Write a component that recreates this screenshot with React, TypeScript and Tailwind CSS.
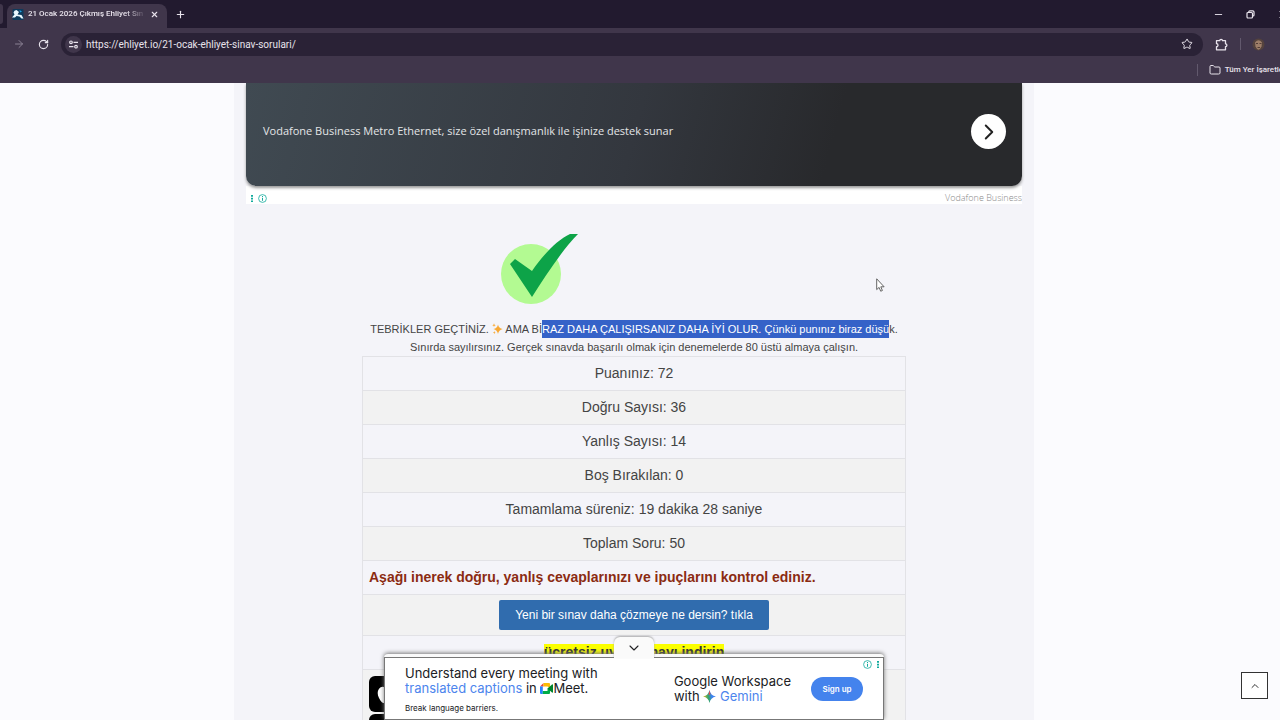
import React from 'react';
import { ArrowRight, ChevronDown, ChevronRight, ChevronUp, Folder, Minus, Plus, RotateCw, Star, X } from 'lucide-react';

const results = [
  'Puanınız: 72',
  'Doğru Sayısı: 36',
  'Yanlış Sayısı: 14',
  'Boş Bırakılan: 0',
  'Tamamlama süreniz: 19 dakika 28 saniye',
  'Toplam Soru: 50',
];

export default function App() {
  return (
    <div className="flex h-screen flex-col overflow-hidden bg-[#fbfbfe] font-['Liberation_Sans',Arial,sans-serif] text-[#444]">
      <BrowserHeader />

      <div className="relative min-h-0 flex-1 overflow-hidden pr-3">
        <main className="mx-auto flex h-full w-full max-w-[800px] flex-col overflow-hidden bg-[#f4f4f9] px-3">
          <TopAd />

          <section className="flex flex-col items-center pt-7">
            <div className="w-full max-w-[544px] pl-[136px]">
              <CheckMark />
            </div>
            <p className="mt-3 text-center text-[11px] leading-[18px]">
              TEBRİKLER GEÇTİNİZ. <Sparkles /> AMA Bİ
              <mark className="inline-block bg-[#3562c8] text-white">
                RAZ DAHA ÇALIŞIRSANIZ DAHA İYİ OLUR. Çünkü punınız biraz düşü
              </mark>
              k.
              <br />
              Sınırda sayılırsınız. Gerçek sınavda başarılı olmak için denemelerde 80 üstü almaya çalışın.
            </p>
            <ResultTable />
          </section>
        </main>

        <BottomAd />

        <button
          aria-label="Yukarı çık"
          className="absolute right-3 bottom-[21px] flex size-[27px] items-center justify-center border border-[#333] bg-white text-[#333]"
        >
          <ChevronUp size={12} />
        </button>

        <svg className="absolute top-[195px] left-[876px]" width="9" height="14" viewBox="0 0 9 14">
          <path d="M.7.8v10.8l2.4-2.2 1.6 3.8 1.7-.7-1.6-3.7h3.3z" fill="#fff" stroke="#555" strokeWidth=".9" />
        </svg>
      </div>
    </div>
  );
}

function BrowserHeader() {
  return (
    <header className="shrink-0 overflow-hidden bg-[#40364b] font-['Roboto','Noto_Sans',sans-serif] text-[#e8e3ec]">
      {/* Tab strip */}
      <div className="flex h-7 items-end bg-[#221a2f]">
        <div className="mr-1 mb-1 h-5 w-[3px] rounded-r-md bg-[#40364b]" />
        <div className="flex h-6 w-40 items-center rounded-t-lg bg-[#40364b] pr-2 pb-1 pl-[5px]">
          <TabLogo />
          <span className="ml-1 flex-1 overflow-hidden text-[8px] font-medium whitespace-nowrap [mask-image:linear-gradient(to_right,black_82%,transparent)]">
            21 Ocak 2026 Çıkmış Ehliyet Sın
          </span>
          <button aria-label="Sekmeyi kapat" className="ml-1">
            <X size={9} strokeWidth={3} />
          </button>
        </div>
        <button aria-label="Yeni sekme" className="mb-2 ml-2">
          <Plus size={11} strokeWidth={2.5} />
        </button>
        <div className="mb-2 ml-auto flex items-center">
          <button aria-label="Küçült" className="mr-[22px]">
            <Minus size={11} strokeWidth={2} />
          </button>
          <button aria-label="Geri yükle" className="mr-[22px]">
            <svg width="9" height="9" viewBox="0 0 9 9" fill="none" stroke="currentColor" strokeWidth="1.2">
              <rect x="1" y="2.5" width="5.5" height="5.5" rx="1" />
              <path d="M2.8 2.3V1.8a1 1 0 0 1 1-1h3a1.2 1.2 0 0 1 1.2 1.2v3a1 1 0 0 1-1 1h-.4" />
            </svg>
          </button>
          <button aria-label="Kapat" className="-mr-2">
            <X size={11} />
          </button>
        </div>
      </div>

      {/* Toolbar */}
      <div className="flex h-8 items-center pl-[13px]">
        <button aria-label="İleri" className="text-[#8a8194]">
          <ArrowRight size={12} />
        </button>
        <button aria-label="Yenile" className="ml-[13px]">
          <RotateCw size={11} strokeWidth={2.5} />
        </button>
        <div className="ml-3 flex h-[23px] flex-1 items-center rounded-full bg-[#2a2236] pr-[10px] pl-1">
          <button aria-label="Site bilgileri" className="flex size-[17px] items-center justify-center rounded-full bg-[#40364b]">
            <svg width="9" height="9" viewBox="0 0 9 9" fill="none" stroke="currentColor" strokeWidth="1.2">
              <circle cx="2" cy="2.3" r="1.3" />
              <path d="M4.5 2.3H9M0 6.7h4.5" />
              <circle cx="7" cy="6.7" r="1.3" />
            </svg>
          </button>
          <input
            aria-label="Adres"
            type="text"
            readOnly
            value="https://ehliyet.io/21-ocak-ehliyet-sinav-sorulari/"
            className="ml-1 min-w-0 flex-1 bg-transparent text-[10px] outline-none"
          />
          <button aria-label="Yer işareti ekle">
            <Star size={12} strokeWidth={2} />
          </button>
        </div>
        <button aria-label="Uzantılar" className="ml-3">
          <svg width="13" height="13" viewBox="0 0 13 13" fill="none" stroke="currentColor" strokeWidth="1.3" strokeLinejoin="round">
            <path d="M1.500 2.700h3.200a1.400 1.400 0 0 1 2.800 0h3v3.100a1.400 1.400 0 0 1 0 2.800v3.200h-9V8.700a1.500 1.500 0 0 0 0-3z" />
          </svg>
        </button>
        <div className="ml-3 h-3 w-px bg-[#62596d]" />
        <button aria-label="Profil" className="mr-[15px] ml-[11px]">
          <svg width="13" height="13" viewBox="0 0 13 13">
            <circle cx="6.5" cy="6.5" r="6" fill="#54433e" />
            <path d="M3 4.500Q6.500 0 10 4.500L9.500 8.500Q6.500 15 3.500 8.500z" fill="#9d7e68" />
            <path d="M4 5.500h2M7.500 5.500h2M5.500 9.500h2.500" stroke="#523d36" />
          </svg>
        </button>
      </div>

      {/* Bookmarks */}
      <div className="flex h-[23px] items-start justify-end pt-0.5">
        <div className="mt-0.5 h-3 w-px bg-[#62596d]" />
        <button className="-mr-2 ml-[11px] flex items-center gap-1 text-[8px] leading-4 font-medium whitespace-nowrap">
          <Folder size={12} strokeWidth={2} />
          Tüm Yer İşaretleri
        </button>
      </div>
    </header>
  );
}

function TopAd() {
  return (
    <aside className="shrink-0 bg-white font-['Open_Sans','Noto_Sans',sans-serif]">
      <div className="bg-[#f4f4f9]">
        <div className="flex h-[103px] items-center justify-between rounded-b-[10px] bg-linear-[105deg] from-[#404a52] via-[#33373e] via-50% to-[#28292c] to-75% pr-4 pb-1.5 pl-[17px] shadow-[0_2px_3px_#999]">
          <p className="text-[11px] text-[#e3e5e7]">
            Vodafone Business Metro Ethernet, size özel danışmanlık ile işinize destek sunar
          </p>
          <button aria-label="Devam" className="flex size-[35px] items-center justify-center rounded-full bg-white text-[#222]">
            <ChevronRight size={26} strokeWidth={1.8} />
          </button>
        </div>
      </div>
      <div className="flex h-[18px] items-center justify-between pt-1.5 pl-1">
        <AdChoices reversed />
        <span className="text-[9px] font-light text-[#888]">Vodafone Business</span>
      </div>
    </aside>
  );
}

function ResultTable() {
  return (
    <table className="w-full max-w-[544px] border-collapse border border-[#e2e2e6] text-center text-sm">
      <tbody>
        {results.map((item) => (
          <tr key={item} className="h-[34px] border-b border-[#e2e2e6] even:bg-[#f2f2f2]">
            <td className="pb-px">{item}</td>
          </tr>
        ))}
        <tr className="h-[34px] border-b border-[#e2e2e6]">
          <td className="pb-px pl-1.5 text-left font-bold text-[#8b2b12]">
            Aşağı inerek doğru, yanlış cevaplarınızı ve ipuçlarını kontrol ediniz.
          </td>
        </tr>
        <tr className="h-[41px] border-b border-[#e2e2e6] bg-[#f2f2f2]">
          <td>
            <button className="mx-auto block h-[30px] rounded-xs bg-[#306cae] px-4 text-xs text-white">
              Yeni bir sınav daha çözmeye ne dersin? tıkla
            </button>
          </td>
        </tr>
        <tr className="h-[34px] border-b border-[#e2e2e6]">
          <td className="pb-px font-bold text-[#333]">
            <mark className="bg-[#fbff00] text-inherit">ücretsiz uygulamayı indirin</mark>
          </td>
        </tr>
        <tr className="bg-[#f2f2f2]">
          <td className="px-1.5 pt-1.5">
            <div className="flex flex-col gap-0.5">
              <a href="#ios" aria-label="App Store" className="flex h-9 w-32 items-center rounded-md bg-black pl-2">
                <svg width="20" height="22" viewBox="0 0 20 22" fill="#fff">
                  <path d="M10 6C4-.5-2 8 2 15c4 8 6 4 9 4 4 2 6-1 8-5-5-3-4-7-1-9-3-2-5-1-8 1z" />
                </svg>
              </a>
              <a href="#android" aria-label="Google Play" className="flex h-9 w-32 items-start rounded-md bg-black pt-1.5 pl-2">
                <svg width="18" height="20" viewBox="0 0 18 20">
                  <path d="M0 0l18 10L0 20z" fill="#0ca98b" />
                </svg>
              </a>
            </div>
          </td>
        </tr>
      </tbody>
    </table>
  );
}

function BottomAd() {
  return (
    <aside className="absolute inset-x-0 bottom-0 flex flex-col items-center pr-3 font-['Inter',sans-serif] text-[#202124]">
      <button
        aria-label="Reklamı gizle"
        className="z-10 -mb-1 flex h-[21px] w-10 items-center justify-center rounded-t-md bg-[#fafafa] shadow-[0_-1px_2px_#aaa]"
      >
        <ChevronDown size={16} strokeWidth={1.6} />
      </button>
      <div className="w-full max-w-[500px] rounded-t-sm bg-[#fafafa] pt-[3px] shadow-[0_-1px_4px_#777]">
        <div className="relative flex h-[63px] items-center border border-[#777] bg-white pr-5 pl-5">
          <div className="flex-1 pt-0.5">
            <p className="text-[13px] leading-[15px] whitespace-nowrap">
              Understand every meeting with
              <br />
              <span className="text-[#4d85ed]">translated captions</span> in <MeetLogo />
              Meet.
            </p>
            <p className="mt-1.5 text-[8px] leading-3">Break language barriers.</p>
          </div>
          <p className="mr-5 text-[13px] leading-[15px] whitespace-nowrap">
            Google Workspace
            <br />
            with <GeminiLogo /> <span className="text-[#4d85ed]">Gemini</span>
          </p>
          <button className="h-6 w-[52px] rounded-full bg-[#4483ed] text-[8px] font-semibold text-white">Sign up</button>
          <div className="absolute top-0 right-[3px] flex">
            <AdChoices />
          </div>
        </div>
      </div>
    </aside>
  );
}

function AdChoices({ reversed = false }: { reversed?: boolean }) {
  return (
    <button
      aria-label="Reklam seçenekleri"
      className={`flex items-center gap-1 py-0.5 text-[#12ab9d] ${reversed ? 'flex-row-reverse' : ''}`}
    >
      <svg width="9" height="9" viewBox="0 0 9 9" fill="none" stroke="currentColor">
        <circle cx="4.5" cy="4.5" r="3.9" strokeWidth=".8" />
        <path d="M4.500 3.800v3M4.500 2v1" />
      </svg>
      <svg width="4" height="9" viewBox="0 0 4 9" fill="currentColor">
        <path d="M1 1h2v1.700H1zM1 3.700h2v1.700H1zM1 6.400h2v1.700H1z" />
      </svg>
    </button>
  );
}

function CheckMark() {
  return (
    <svg width="84" height="76" viewBox="0 0 84 76">
      <circle cx="33" cy="42" r="30" fill="#b3fa92" />
      <path d="M12 32l5-5 17 12C45 23 59 8 72 2h8C65 17 48 43 34 65z" fill="#0da348" />
    </svg>
  );
}

function Sparkles() {
  return (
    <svg className="inline-block align-[-2px]" width="11" height="12" viewBox="0 0 11 12" fill="#f8a833">
      <path d="M6 1.500q.7 3.700 4.700 4.500Q6.700 7 6 11 5.300 7 1.500 6 5.300 5.200 6 1.500zM2 .3l.5 1.400 1.300.5-1.300.5L2 4l-.5-1.300L.2 2.200l1.300-.5zM2.300 8l.4 1.200 1.100.5-1.100.4-.4 1.200-.4-1.200-1.100-.4 1.100-.5z" />
    </svg>
  );
}

function TabLogo() {
  return (
    <svg width="12" height="11" viewBox="0 0 12 11">
      <rect x=".5" width="11" height="11" rx="1" fill="#0e3a5c" />
      <path d="M1.500 3.500Q2 1 4.500 1L7 3 5.500 5.500l4 .5 2 3.500H9.500L7.500 7.500 4.500 7 3 8.500H0L2.500 5.500z" fill="#e9f7ff" />
      <path d="M7.500 1l2.500 1.500-2 1z" fill="#24a1df" />
    </svg>
  );
}

function MeetLogo() {
  return (
    <svg className="inline-block align-[-1px]" width="13" height="11" viewBox="0 0 13 11">
      <path d="M0 3.500L3.500 0v3.500z" fill="#ea4335" />
      <path d="M3.500 0H9q1 0 1 1v4L7.500 3.500h-4z" fill="#fbbc04" />
      <path d="M0 3.500h2.800V11H1q-1 0-1-1z" fill="#2684fc" />
      <path d="M2.800 8h4.700V5.500L10 4v6q0 1-1 1H2.800z" fill="#00ac47" />
      <path d="M7.500 5.500L12 1.500q1-.5 1 .5v7q0 1-1 .5z" fill="#00832d" />
    </svg>
  );
}

function GeminiLogo() {
  return (
    <svg className="inline-block align-[-2px]" width="13" height="13" viewBox="0 0 13 13">
      <defs>
        <linearGradient id="gemini" x1="0" y1=".6" x2="1" y2=".4">
          <stop offset="0" stopColor="#f2bd20" />
          <stop offset=".4" stopColor="#36a66a" />
          <stop offset=".65" stopColor="#3b82ed" />
          <stop offset="1" stopColor="#4b87ed" />
        </linearGradient>
      </defs>
      <path d="M6.500 0Q7.500 5.500 13 6.500 7.500 7.500 6.500 13 5.500 7.500 0 6.500 5.500 5.500 6.500 0z" fill="url(#gemini)" />
      <path d="M6.500 0Q6.800 2.500 7.500 4L6.500 5 5.500 4.500Q6.200 2.500 6.500 0z" fill="#e94c4c" />
    </svg>
  );
}
